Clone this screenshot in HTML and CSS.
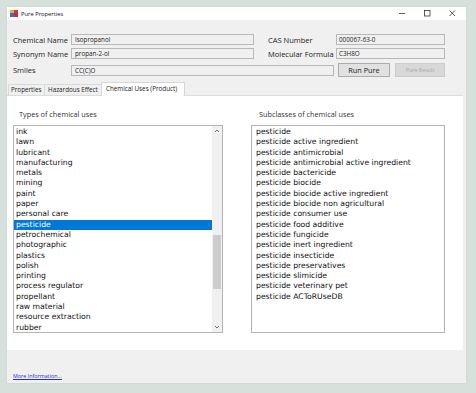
FILE: index.html
```html
<!DOCTYPE html>
<html>
<head>
<meta charset="utf-8">
<link rel="stylesheet" href="styles.css">
</head>
<body>
<div class="window">
  <div class="titlebar">
    <svg class="appicon" width="8" height="7" viewBox="0 0 8 7">
      <rect x="0" y="0" width="4" height="3" fill="#e8b020"/>
      <rect x="4" y="0" width="4" height="3" fill="#d83a2a"/>
      <rect x="0" y="3" width="4" height="4" fill="#3a6fd0"/>
      <rect x="4" y="3" width="4" height="4" fill="#c02a60"/>
    </svg>
    <span class="title">Pure Properties</span>
    <div class="controls">
      <svg class="ctl" width="25" height="13" viewBox="0 0 25 13"><line x1="9" y1="6.5" x2="15" y2="6.5" stroke="#333" stroke-width="0.8"/></svg>
      <svg class="ctl" width="25" height="13" viewBox="0 0 25 13"><rect x="9.5" y="3.5" width="5.5" height="5.5" fill="none" stroke="#333" stroke-width="0.8"/></svg>
      <svg class="ctl" width="25" height="13" viewBox="0 0 25 13"><path d="M9.5 3.5 L15 9 M15 3.5 L9.5 9" stroke="#333" stroke-width="0.8"/></svg>
    </div>
  </div>

  <div class="form">
    <div class="row r1">
      <span class="lbl">Chemical Name</span>
      <div class="tb wide">Isopropanol</div>
      <span class="lbl lbl2">CAS Number</span>
      <div class="tb narrow">000067-63-0</div>
    </div>
    <div class="row r2">
      <span class="lbl">Synonym Name</span>
      <div class="tb wide">propan-2-ol</div>
      <span class="lbl lbl2">Molecular Formula</span>
      <div class="tb narrow">C3H8O</div>
    </div>
    <div class="row r3">
      <span class="lbl">Smiles</span>
      <div class="tb smiles">CC(C)O</div>
      <div class="btn run">Run Pure</div>
      <div class="btn disabled">Pure Result</div>
    </div>
  </div>

  <div class="tabs">
    <div class="tab t1">Properties</div>
    <div class="tab t2">Hazardous Effect</div>
    <div class="tab active">Chemical Uses (Product)</div>
  </div>

  <div class="page">
    <div class="col left">
      <div class="grouplbl">Types of chemical uses</div>
      <div class="listbox">
        <div class="items">
          <div class="it">ink</div>
          <div class="it">lawn</div>
          <div class="it">lubricant</div>
          <div class="it">manufacturing</div>
          <div class="it">metals</div>
          <div class="it">mining</div>
          <div class="it">paint</div>
          <div class="it">paper</div>
          <div class="it">personal care</div>
          <div class="it sel">pesticide</div>
          <div class="it">petrochemical</div>
          <div class="it">photographic</div>
          <div class="it">plastics</div>
          <div class="it">polish</div>
          <div class="it">printing</div>
          <div class="it">process regulator</div>
          <div class="it">propellant</div>
          <div class="it">raw material</div>
          <div class="it">resource extraction</div>
          <div class="it">rubber</div>
        </div>
        <div class="scrollbar">
          <div class="arrow">
            <svg width="10" height="10" viewBox="0 0 10 10"><path d="M3 6 L5 4 L7 6" fill="none" stroke="#606060" stroke-width="0.9"/></svg>
          </div>
          <div class="track"><div class="thumb"></div></div>
          <div class="arrow">
            <svg width="10" height="10" viewBox="0 0 10 10"><path d="M3 4 L5 6 L7 4" fill="none" stroke="#606060" stroke-width="0.9"/></svg>
          </div>
        </div>
      </div>
    </div>
    <div class="col right">
      <div class="grouplbl">Subclasses of chemical uses</div>
      <div class="listbox">
        <div class="items ritems">
          <div class="it">pesticide</div>
          <div class="it">pesticide active ingredient</div>
          <div class="it">pesticide antimicrobial</div>
          <div class="it">pesticide antimicrobial active ingredient</div>
          <div class="it">pesticide bactericide</div>
          <div class="it">pesticide biocide</div>
          <div class="it">pesticide biocide active ingredient</div>
          <div class="it">pesticide biocide non agricultural</div>
          <div class="it">pesticide consumer use</div>
          <div class="it">pesticide food additive</div>
          <div class="it">pesticide fungicide</div>
          <div class="it">pesticide inert ingredient</div>
          <div class="it">pesticide insecticide</div>
          <div class="it">pesticide preservatives</div>
          <div class="it">pesticide slimicide</div>
          <div class="it">pesticide veterinary pet</div>
          <div class="it">pesticide ACToRUseDB</div>
        </div>
      </div>
    </div>
  </div>

  <div class="footer">
    <a class="more" href="#">More Information...</a>
  </div>
</div>
</body>
</html>
```

FILE: styles.css
```css
* { box-sizing: border-box; }
html, body { margin: 0; padding: 0; }
body {
  background: #d6e1db;
  width: 476px;
  height: 393px;
  overflow: hidden;
  font-family: "Open Sans", "Noto Sans", sans-serif;
  color: #1a1a1a;
}
.window {
  margin: 7px 0 0 7px;
  width: 459px;
  height: 376px;
  background: #f0f0f0;
  display: flex;
  flex-direction: column;
  box-shadow: 0 0 2px rgba(0,0,0,0.08);
}
.titlebar {
  height: 13px;
  background: #ffffff;
  display: flex;
  align-items: center;
  padding-left: 3px;
}
.appicon { display: block; }
.title {
  font-size: 5.8px;
  margin-left: 3px;
  color: #111;
}
.controls {
  margin-left: auto;
  display: flex;
  margin-right: 1px;
}
.ctl { display: block; }

.form {
  display: flex;
  flex-direction: column;
  padding-left: 6px;
}
.row {
  display: flex;
  align-items: center;
}
.r1 { margin-top: 14px; height: 11px; }
.r2 { margin-top: 3px; height: 11px; }
.r3 { margin-top: 4px; height: 14px; }
.lbl {
  width: 58px;
  font-size: 7.5px;
  color: #222;
  white-space: nowrap;
}
.lbl2 { width: 68px; margin-left: 14px; }
.tb {
  height: 11px;
  border: 1px solid #b8b8b8;
  background: #f0f0f0;
  font-size: 6.3px;
  line-height: 9px;
  padding-left: 3px;
  color: #222;
  white-space: nowrap;
}
.wide { width: 183px; }
.narrow { width: 109px; padding-left: 2px; }
.smiles { width: 263px; }
.btn {
  height: 14px;
  border: 1px solid #adadad;
  background: #e1e1e1;
  font-size: 7.3px;
  line-height: 12px;
  text-align: center;
  color: #1a1a1a;
}
.run { width: 52px; margin-left: 4px; }
.disabled {
  width: 50px;
  margin-left: 5px;
  background: #d8d8d8;
  border-color: #cccccc;
  color: #a8a8a8;
  font-size: 5.4px;
}

.tabs {
  margin-top: 5px;
  height: 13px;
  display: flex;
  align-items: flex-end;
  padding-left: 1px;
  position: relative;
  z-index: 1;
}
.tab {
  height: 11px;
  font-size: 6.3px;
  line-height: 10px;
  padding: 0 2px;
  border: 1px solid #dadada;
  border-bottom: none;
  background: #f0f0f0;
  color: #222;
  white-space: nowrap;
}
.t1 { width: 37px; }
.t2 { width: 58px; margin-left: -1px; padding-left: 3px; }
.tab.active {
  height: 14px;
  width: 84px;
  margin-left: -1px;
  margin-bottom: -1px;
  background: #ffffff;
  border-color: #d6d6d6;
  line-height: 12px;
  padding-left: 4px;
}

.page {
  height: 266px;
  margin-right: 3px;
  background: #ffffff;
  border-top: 1px solid #dcdcdc;
  display: flex;
  padding-left: 6px;
  padding-top: 13px;
}
.col { display: flex; flex-direction: column; }
.left { width: 210px; }
.right { width: 194px; margin-left: 28px; }
.grouplbl {
  height: 11px;
  font-size: 7.3px;
  line-height: 11px;
  color: #333;
  margin-bottom: 5px;
  padding-left: 6px;
  white-space: nowrap;
}
.right .grouplbl { padding-left: 8px; }
.listbox {
  height: 208px;
  border: 1px solid #b4b4b4;
  display: flex;
  background: #fff;
}
.items {
  flex: 1;
  padding-top: 1px;
  font-family: "DejaVu Sans", "Verdana", sans-serif;
  font-size: 7.7px;
  color: #111;
  overflow: hidden;
}
.it {
  height: 10.3px;
  line-height: 10.3px;
  padding-left: 2px;
  white-space: nowrap;
}
.ritems .it { padding-left: 4px; }
.it.sel {
  background: #0078d7;
  color: #ffffff;
}
.scrollbar {
  width: 10px;
  background: #f0f0f0;
  display: flex;
  flex-direction: column;
}
.arrow { height: 10px; display: flex; align-items: center; justify-content: center; }
.arrow svg { display: block; }
.track { flex: 1; padding: 0 1px; }
.thumb {
  margin-top: 99px;
  height: 54px;
  background: #cdcdcd;
}

.footer {
  flex: 1;
  padding-left: 6px;
  padding-top: 11px;
}
.more {
  font-size: 5.4px;
  color: #2a2ae0;
  text-decoration: underline;
}
```
